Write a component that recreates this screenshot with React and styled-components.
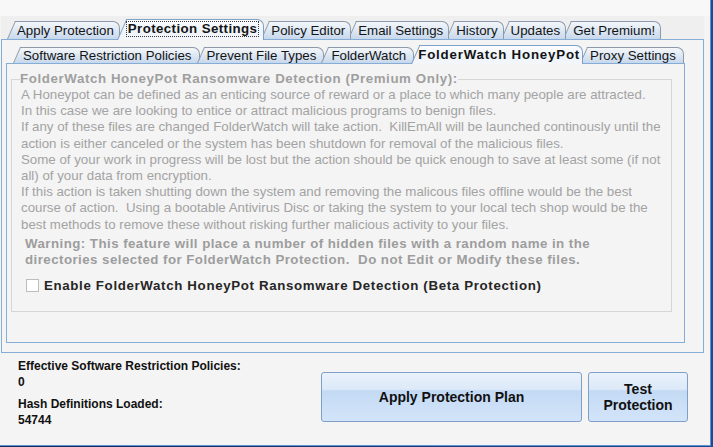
import styled, { createGlobalStyle } from "styled-components";

const GlobalStyle = createGlobalStyle`
  html, body {
    margin: 0;
    padding: 0;
    background: #0f2d63;
  }
  body {
    font-family: "Liberation Sans", Arial, sans-serif;
  }
`;

const outerTabs = [
  "Apply Protection",
  "Protection Settings",
  "Policy Editor",
  "Email Settings",
  "History",
  "Updates",
  "Get Premium!",
];

const innerTabs = [
  "Software Restriction Policies",
  "Prevent File Types",
  "FolderWatch",
  "FolderWatch HoneyPot",
  "Proxy Settings",
];

const bodyLines = [
  "A Honeypot can be defined as an enticing source of reward or a place to which many people are attracted.",
  "In this case we are looking to entice or attract malicious programs to benign files.",
  "If any of these files are changed FolderWatch will take action.  KillEmAll will be launched continously until the",
  "action is either canceled or the system has been shutdown for removal of the malicious files.",
  "Some of your work in progress will be lost but the action should be quick enough to save at least some (if not",
  "all) of your data from encryption.",
  "If this action is taken shutting down the system and removing the malicous files offline would be the best",
  "course of action.  Using a bootable Antivirus Disc or taking the system to your local tech shop would be the",
  "best methods to remove these without risking further malicious activity to your files.",
];

const warningLines = [
  "Warning: This feature will place a number of hidden files with a random name in the",
  "directories selected for FolderWatch Protection.  Do not Edit or Modify these files.",
];

function TabStrip({ tabs, selected, small, focus }) {
  const n = tabs.length;
  return (
    <Strip $small={small}>
      {tabs.map((label, i) => {
        const active = i === selected;
        const z = active ? n + 1 : i < selected ? i + 1 : n - i;
        return (
          <Tab key={label} $active={active} $first={i === 0} $z={z} $small={small}>
            {active && focus ? <Focus>{label}</Focus> : label}
          </Tab>
        );
      })}
    </Strip>
  );
}

export default function App() {
  return (
    <>
      <GlobalStyle />
      <Screen>
        <Window>
          <TopBand />
          <TabStrip tabs={outerTabs} selected={1} focus />
          <OuterPanel>
            <TabStrip tabs={innerTabs} selected={3} small />
            <InnerPanel>
              <Group>
                <Legend>FolderWatch HoneyPot Ransomware Detection (Premium Only):</Legend>
                {bodyLines.map((l) => (
                  <Line key={l}>{l}</Line>
                ))}
                <Warning>
                  {warningLines.map((l) => (
                    <Line key={l}>{l}</Line>
                  ))}
                </Warning>
                <CheckRow>
                  <CheckBox />
                  <CheckLabel>Enable FolderWatch HoneyPot Ransomware Detection (Beta Protection)</CheckLabel>
                </CheckRow>
              </Group>
            </InnerPanel>
          </OuterPanel>
          <Footer>
            <Info>
              <InfoPair>
                <InfoText>Effective Software Restriction Policies:</InfoText>
                <InfoText>0</InfoText>
              </InfoPair>
              <InfoPair>
                <InfoText>Hash Definitions Loaded:</InfoText>
                <InfoText>54744</InfoText>
              </InfoPair>
            </Info>
            <Button $width={261}>Apply Protection Plan</Button>
            <Button $width={100}>
              Test
              <br />
              Protection
            </Button>
          </Footer>
        </Window>
      </Screen>
    </>
  );
}

const Screen = styled.div`
  width: 713px;
  height: 447px;
  display: flex;
  background: linear-gradient(90deg, #0d2a5e, #1b4b93);
  overflow: hidden;
`;

const Window = styled.div`
  box-sizing: border-box;
  width: 711px;
  height: 446px;
  display: flex;
  flex-direction: column;
  padding-left: 1px;
  background: #f4f4f4;
  border-right: 1px solid #5f92d2;
  border-bottom: 1px solid #5f92d2;
`;

const TopBand = styled.div`
  height: 16px;
  margin-left: -1px;
  background: #f8f8f8;
`;

const Strip = styled.div`
  display: flex;
  align-items: flex-end;
  height: ${(p) => (p.$small ? 19 : 23)}px;
  width: ${(p) => (p.$small ? 679 : 703)}px;
  padding-left: ${(p) => (p.$small ? 7 : 6)}px;
  box-sizing: border-box;
  background: ${(p) => (p.$small ? "transparent" : "#efefef")};
`;

const edge = (p) => (p.$active ? "#7e9fc6" : "#8e9aa8");

const tabPadding = (p) => {
  if (p.$active) return p.$small ? "0 3px 1px 7px" : "0 5px 1px 9px";
  return p.$small ? "0 8px 0 10px" : "0 6px 0 10px";
};

const Tab = styled.div`
  position: relative;
  z-index: ${(p) => p.$z};
  display: flex;
  align-items: center;
  box-sizing: border-box;
  height: ${(p) => (p.$small ? (p.$active ? 19 : 16) : p.$active ? 21 : 18)}px;
  margin-left: ${(p) => (p.$first ? 0 : -3)}px;
  margin-bottom: ${(p) => (p.$active ? -1 : 0)}px;
  padding: ${tabPadding};
  font-size: 13.3px;
  font-weight: ${(p) => (p.$active ? 700 : 400)};
  letter-spacing: ${(p) => (p.$active ? (p.$small ? 0.8 : 0.4) : 0)}px;
  color: #141414;
  white-space: nowrap;

  &::before,
  &::after {
    content: "";
    position: absolute;
    top: 0;
    bottom: 0;
    z-index: -1;
    background: ${(p) =>
      p.$active
        ? "linear-gradient(#fcfdfe, #eef4fb 60%, #f4f6f9)"
        : "linear-gradient(#f4f7fb, #dfe9f4 45%, #c7d8ec)"};
    border-top: 1px solid ${edge};
  }

  &::before {
    left: 0;
    width: 16px;
    border-left: 1px solid ${edge};
    transform-origin: bottom left;
    transform: skewX(-24deg);
  }

  &::after {
    left: 10px;
    right: 0;
    border-right: 1px solid ${edge};
    border-top-right-radius: 7px;
  }
`;

const Focus = styled.span`
  padding: 0 1px;
  line-height: 14px;
  border: 1px dotted #3a3a3a;
`;

const OuterPanel = styled.div`
  box-sizing: border-box;
  width: 703px;
  display: flex;
  flex-direction: column;
  padding: 4px 0 9px 4px;
  border: 1px solid #86acd8;
  background: #f4f4f4;
`;

const InnerPanel = styled.div`
  box-sizing: border-box;
  width: 679px;
  height: 280px;
  padding: 7px 12px 0 4px;
  border: 1px solid #86acd8;
  background: #f4f4f4;
`;

const Group = styled.fieldset`
  box-sizing: border-box;
  height: 241px;
  margin: 0;
  padding: 0 9px;
  min-width: 0;
  border: 1px solid #d6d6d6;
`;

const Legend = styled.legend`
  padding: 0;
  margin-left: -1px;
  line-height: 16px;
  font-size: 13.3px;
  font-weight: 700;
  letter-spacing: 0.6px;
  color: #9f9f9f;
`;

const Line = styled.div`
  white-space: pre;
  line-height: 16.2px;
  font-size: 13.3px;
  color: #a3a3a3;
`;

const Warning = styled.div`
  margin-top: 3px;
  padding-left: 4px;

  & > div {
    font-weight: 700;
    letter-spacing: 0.45px;
    color: #9d9d9d;
  }
`;

const CheckRow = styled.div`
  display: flex;
  align-items: center;
  gap: 5px;
  margin-top: 9px;
  padding-left: 5px;
  height: 16px;
`;

const CheckBox = styled.span`
  box-sizing: border-box;
  width: 13px;
  height: 13px;
  background: #ffffff;
  border: 1px solid #bdbdbd;
`;

const CheckLabel = styled.span`
  font-size: 13.3px;
  font-weight: 700;
  letter-spacing: 0.65px;
  color: #262626;
  white-space: nowrap;
`;

const Footer = styled.div`
  display: flex;
  align-items: flex-start;
  padding-left: 17px;
`;

const Info = styled.div`
  width: 303px;
  padding-top: 5px;
  display: flex;
  flex-direction: column;
  gap: 6px;
`;

const InfoPair = styled.div`
  display: flex;
  flex-direction: column;
`;

const InfoText = styled.div`
  font-size: 12px;
  line-height: 16px;
  font-weight: 700;
  color: #111;
`;

const Button = styled.div`
  box-sizing: border-box;
  width: ${(p) => p.$width}px;
  height: 50px;
  margin-top: 19px;
  margin-right: 6px;
  display: flex;
  align-items: center;
  justify-content: center;
  text-align: center;
  font-size: 14px;
  line-height: 16px;
  font-weight: 700;
  color: #111;
  border: 1px solid #7f9fc7;
  border-radius: 3px;
  background: linear-gradient(#eaf2fc 0%, #dce9f8 34%, #c4daf4 37%, #d2e4f9 100%);
`;
